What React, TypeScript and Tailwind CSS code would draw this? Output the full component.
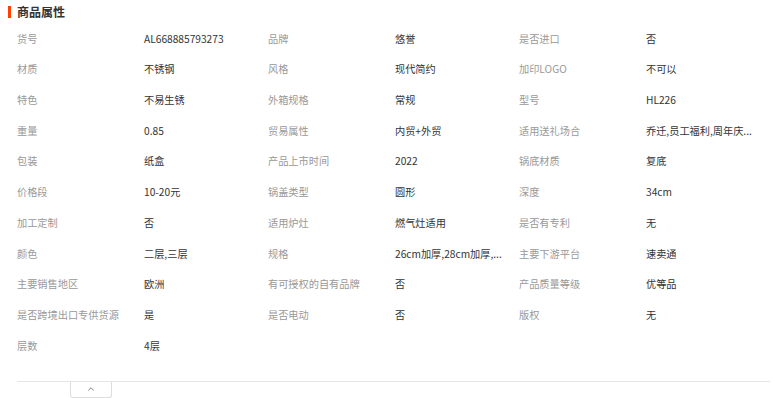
import React from 'react';
import { ChevronUp } from 'lucide-react';

const attrs: [string, string][] = [
  ['货号', 'AL668885793273'],
  ['品牌', '悠誉'],
  ['是否进口', '否'],
  ['材质', '不锈钢'],
  ['风格', '现代简约'],
  ['加印LOGO', '不可以'],
  ['特色', '不易生锈'],
  ['外箱规格', '常规'],
  ['型号', 'HL226'],
  ['重量', '0.85'],
  ['贸易属性', '内贸+外贸'],
  ['适用送礼场合', '乔迁,员工福利,周年庆...'],
  ['包装', '纸盒'],
  ['产品上市时间', '2022'],
  ['锅底材质', '复底'],
  ['价格段', '10-20元'],
  ['锅盖类型', '圆形'],
  ['深度', '34cm'],
  ['加工定制', '否'],
  ['适用炉灶', '燃气灶适用'],
  ['是否有专利', '无'],
  ['颜色', '二层,三层'],
  ['规格', '26cm加厚,28cm加厚,...'],
  ['主要下游平台', '速卖通'],
  ['主要销售地区', '欧洲'],
  ['有可授权的自有品牌', '否'],
  ['产品质量等级', '优等品'],
  ['是否跨境出口专供货源', '是'],
  ['是否电动', '否'],
  ['版权', '无'],
  ['层数', '4层'],
];

export default function App() {
  return (
    <div className="w-[774px] h-[398px] bg-white overflow-hidden font-['Noto_Sans_CJK_SC',sans-serif]">
      <div className="flex items-center h-[23px] pl-2">
        <span className="w-[3px] h-[12px] bg-[#ff4000] mr-[6px]" />
        <h2 className="text-[12px] font-bold text-[#333] leading-none">商品属性</h2>
      </div>
      <div className="grid grid-cols-[127px_124px_127px_124px_127px_124px] pl-[17px] text-[10.2px]">
        {attrs.map(([label, value]) => (
          <React.Fragment key={label}>
            <div className="h-[30.7px] flex items-center text-[#999] whitespace-nowrap">{label}</div>
            <div className="h-[30.7px] flex items-center text-[#333] whitespace-nowrap">{value}</div>
          </React.Fragment>
        ))}
      </div>
      <div className="mt-[20px] ml-[17px] mr-[4px] border-t border-[#e5e5e5] relative">
        <button className="absolute left-[53px] top-0 w-[42px] h-[16px] border border-t-0 border-[#ddd] rounded-b-[3px] bg-white flex items-center justify-center">
          <ChevronUp className="w-[10px] h-[10px] text-[#666]" strokeWidth={2} />
        </button>
      </div>
    </div>
  );
}
